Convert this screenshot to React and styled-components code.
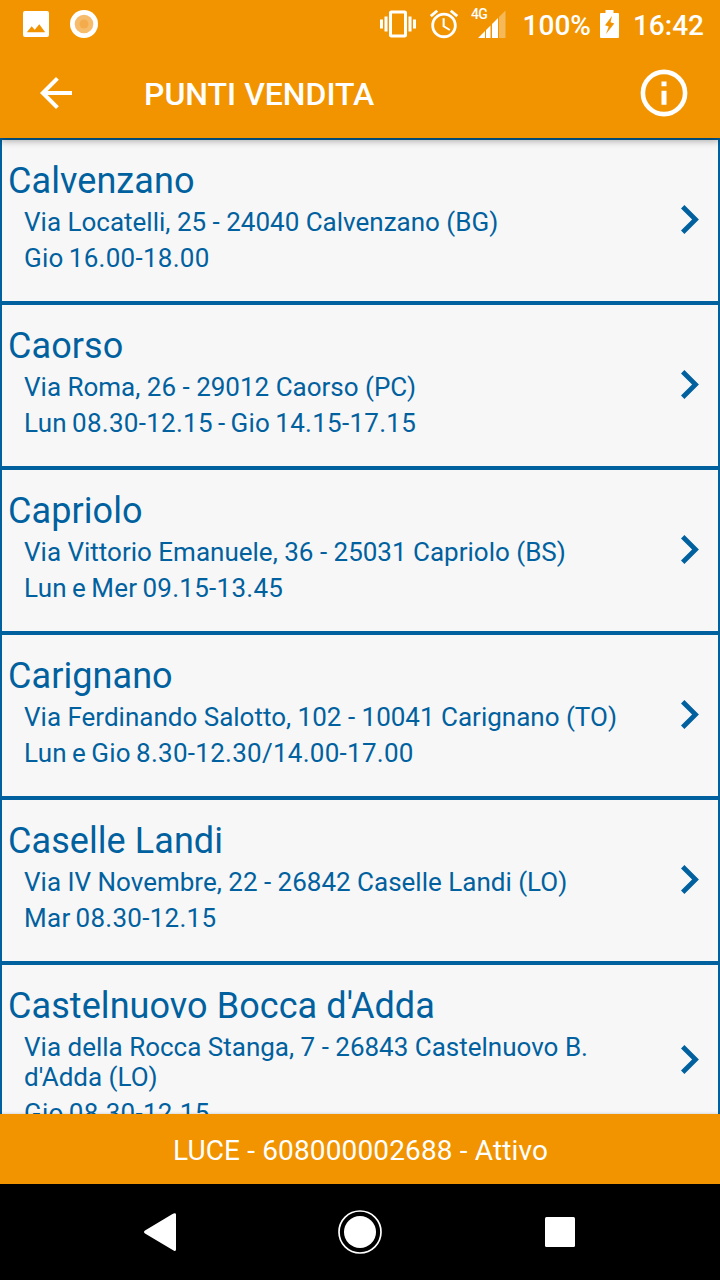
import styled, { createGlobalStyle } from 'styled-components'

const GlobalStyle = createGlobalStyle`
  * {
    box-sizing: border-box;
  }

  body {
    margin: 0;
    font-family: Roboto, "Liberation Sans", sans-serif;
  }
`

const Screen = styled.div`
  width: 720px;
  height: 1280px;
  display: flex;
  flex-direction: column;
  overflow: hidden;
  background-color: #f7f7f7;
`

const Top = styled.header`
  position: relative;
  z-index: 1;
  flex: none;
  height: 138px;
  color: white;
  background-color: #f29400;
  box-shadow: 0 2px 8px rgba(0, 0, 0, 0.4);
`

const StatusBar = styled.div`
  height: 48px;
  padding: 0 16px 0 22px;
  display: flex;
  align-items: center;
  justify-content: space-between;
`

const StatusGroup = styled.div`
  display: flex;
  align-items: center;
`

const Icon = styled.svg`
  display: block;
  flex: none;
  fill: currentColor;
  margin-left: ${(props) => props.$gap || 0}px;
`

const StatusText = styled.span`
  font-size: 28px;
  font-weight: 500;
  line-height: 32px;
  padding-top: 3px;
  margin-left: ${(props) => props.$gap}px;
`

const Network = styled.text`
  font-size: 14px;
  font-weight: 500;
  letter-spacing: -0.6px;
`

const Toolbar = styled.div`
  height: 90px;
  padding: 0 32px;
  display: flex;
  align-items: center;
`

const Heading = styled.h1`
  flex: 1;
  margin: 1px 0 0 64px;
  font-size: 32px;
  font-weight: 500;
  line-height: 38px;
`

const List = styled.main`
  flex: 1;
  min-height: 0;
  overflow: hidden;
`

const Card = styled.article`
  min-height: 165px;
  padding: 20px 19px 28px 6px;
  display: flex;
  align-items: center;
  justify-content: space-between;
  color: #01619f;
  border: 2px solid #01619f;
`

const Info = styled.div`
  width: 620px;
`

const Name = styled.h2`
  margin: 0 0 5px;
  font-size: 36px;
  font-weight: 400;
  line-height: 42px;
  letter-spacing: 0.07px;
`

const Detail = styled.p`
  margin: 0 0 6px 16px;
  font-size: 26px;
  line-height: 30px;
`

const Hours = styled(Detail)`
  margin-bottom: 0;
  letter-spacing: 0.27px;
  word-spacing: -1.6px;
`

const Chevron = styled(Icon)`
  margin-top: 6px;
`

const Supply = styled.div`
  position: relative;
  z-index: 1;
  flex: none;
  height: 70px;
  padding: 3px 0 0 1px;
  display: flex;
  align-items: center;
  justify-content: center;
  color: white;
  font-size: 28px;
  letter-spacing: 0.14px;
  background-color: #f29400;
  box-shadow: 0 0 3px rgba(0, 0, 0, 0.2);
`

const NavBar = styled.nav`
  flex: none;
  height: 96px;
  display: flex;
  align-items: center;
  justify-content: center;
  gap: 156px;
  color: white;
  background-color: black;
`

const shops = [
  { name: 'Calvenzano', address: 'Via Locatelli, 25 - 24040 Calvenzano (BG)', hours: 'Gio 16.00-18.00' },
  { name: 'Caorso', address: 'Via Roma, 26 - 29012 Caorso (PC)', hours: 'Lun 08.30-12.15 - Gio 14.15-17.15' },
  { name: 'Capriolo', address: 'Via Vittorio Emanuele, 36 - 25031 Capriolo (BS)', hours: 'Lun e Mer 09.15-13.45' },
  { name: 'Carignano', address: 'Via Ferdinando Salotto, 102 - 10041 Carignano (TO)', hours: 'Lun e Gio 8.30-12.30/14.00-17.00' },
  { name: 'Caselle Landi', address: 'Via IV Novembre, 22 - 26842 Caselle Landi (LO)', hours: 'Mar 08.30-12.15' },
  { name: "Castelnuovo Bocca d'Adda", address: "Via della Rocca Stanga, 7 - 26843 Castelnuovo B. d'Adda (LO)", hours: 'Gio 08.30-12.15' },
]

const Status = () => {
  return (
    <StatusBar>
      <StatusGroup>
        <Icon width="28" height="28" viewBox="0 0 28 28">
          <path fillRule="evenodd" d="M3 1h22a2 2 0 0 1 2 2v22a2 2 0 0 1-2 2H3a2 2 0 0 1-2-2V3a2 2 0 0 1 2-2zM4.800 22.200h18.400l-5.900-8-4.600 5.500-3-3.500z" />
        </Icon>
        <Icon width="28" height="28" viewBox="0 0 28 28" $gap={20}>
          <circle cx="14" cy="14" r="14" />
          <circle cx="14" cy="14" r="9.300" fill="#f7bb6c" />
          <circle cx="14" cy="14" r="4.500" fill="#f4ab4b" />
        </Icon>
      </StatusGroup>
      <StatusGroup>
        <Icon width="36" height="36" viewBox="0 0 24 24">
          <path d="M0 15h2V9H0v6zm3 2h2V7H3v10zm19-8v6h2V9h-2zm-3 8h2V7h-2v10zM16.500 3h-9C6.670 3 6 3.670 6 4.500v15c0 .83.67 1.500 1.500 1.500h9c.83 0 1.500-.67 1.500-1.500v-15c0-.83-.67-1.500-1.500-1.500zM16 19H8V5h8v14z" />
        </Icon>
        <Icon width="34" height="34" viewBox="0 0 24 24" $gap={11}>
          <path d="M22 5.720l-4.600-3.860-1.290 1.530 4.600 3.860L22 5.720zM7.880 3.390L6.600 1.860 2 5.710l1.290 1.530 4.590-3.850zM12.500 8H11v6l4.750 2.850.75-1.230-4-2.370V8zM12 4c-4.970 0-9 4.030-9 9s4.020 9 9 9c4.970 0 9-4.030 9-9s-4.030-9-9-9zm0 16c-3.870 0-7-3.130-7-7s3.130-7 7-7 7 3.130 7 7-3.130 7-7 7z" />
        </Icon>
        <Icon width="35" height="36" viewBox="0 -4 35 36" $gap={10}>
          <Network x="0" y="9">4G</Network>
          <path d="M7 28l7-7v7zM15 28v-8l4.500-4.500V28zM21 28V14l6-6v20z" />
          <path d="M28 28V7L34.500.5V28z" opacity="0.35" />
        </Icon>
        <StatusText $gap={17}>100%</StatusText>
        <Icon width="19" height="28" viewBox="0 0 19 28" $gap={9}>
          <path fillRule="evenodd" d="M5.500 0h8v3H18a1 1 0 0 1 1 1v23a1 1 0 0 1-1 1H1a1 1 0 0 1-1-1V4a1 1 0 0 1 1-1h4.500zM12 6L5 15.200l3.700 1.200L6 24l8.300-10.600-3.800-1.200z" />
        </Icon>
        <StatusText $gap={14}>16:42</StatusText>
      </StatusGroup>
    </StatusBar>
  )
}

const Shop = ({ item }) => {
  return (
    <Card>
      <Info>
        <Name>{item.name}</Name>
        <Detail>{item.address}</Detail>
        <Hours>{item.hours}</Hours>
      </Info>
      <Chevron width="18" height="29" viewBox="0 0 18 29">
        <path d="M3.400 0L0 3.400l11.100 11.100L0 25.600 3.400 29l14.500-14.500z" />
      </Chevron>
    </Card>
  )
}

const App = () => {
  return (
    <>
      <GlobalStyle />
      <Screen>
        <Top>
          <Status />
          <Toolbar>
            <Icon width="48" height="48" viewBox="0 0 24 24">
              <path d="M20 11H7.830l5.590-5.590L12 4l-8 8 8 8 1.410-1.410L7.830 13H20v-2z" />
            </Icon>
            <Heading>PUNTI VENDITA</Heading>
            <Icon width="48" height="48" viewBox="0 0 48 48">
              <circle cx="24" cy="24" r="21.100" fill="none" stroke="currentColor" strokeWidth="4.600" />
              <path d="M21.500 12.500h5v4.700h-5zM21.500 21.800h5v14h-5z" />
            </Icon>
          </Toolbar>
        </Top>
        <List>
          {shops.map((item) => (
            <Shop item={item} key={item.name} />
          ))}
        </List>
        <Supply>LUCE - 608000002688 - Attivo</Supply>
        <NavBar>
          <Icon width="44" height="44" viewBox="0 0 44 44">
            <path d="M37.500 3.500Q38 3 38 5v34.500q0 2-2 1.200L7 23.500q-2-1.500 0-3L34.500 4q3-1.800 3.500.5z" />
          </Icon>
          <Icon width="44" height="44" viewBox="0 0 44 44">
            <circle cx="22" cy="22" r="21" fill="none" stroke="currentColor" strokeWidth="1.700" />
            <circle cx="22" cy="22" r="16" />
          </Icon>
          <Icon width="44" height="44" viewBox="0 0 44 44">
            <rect x="7" y="7" width="30" height="30" rx="1.500" />
          </Icon>
        </NavBar>
      </Screen>
    </>
  )
}

export default App
